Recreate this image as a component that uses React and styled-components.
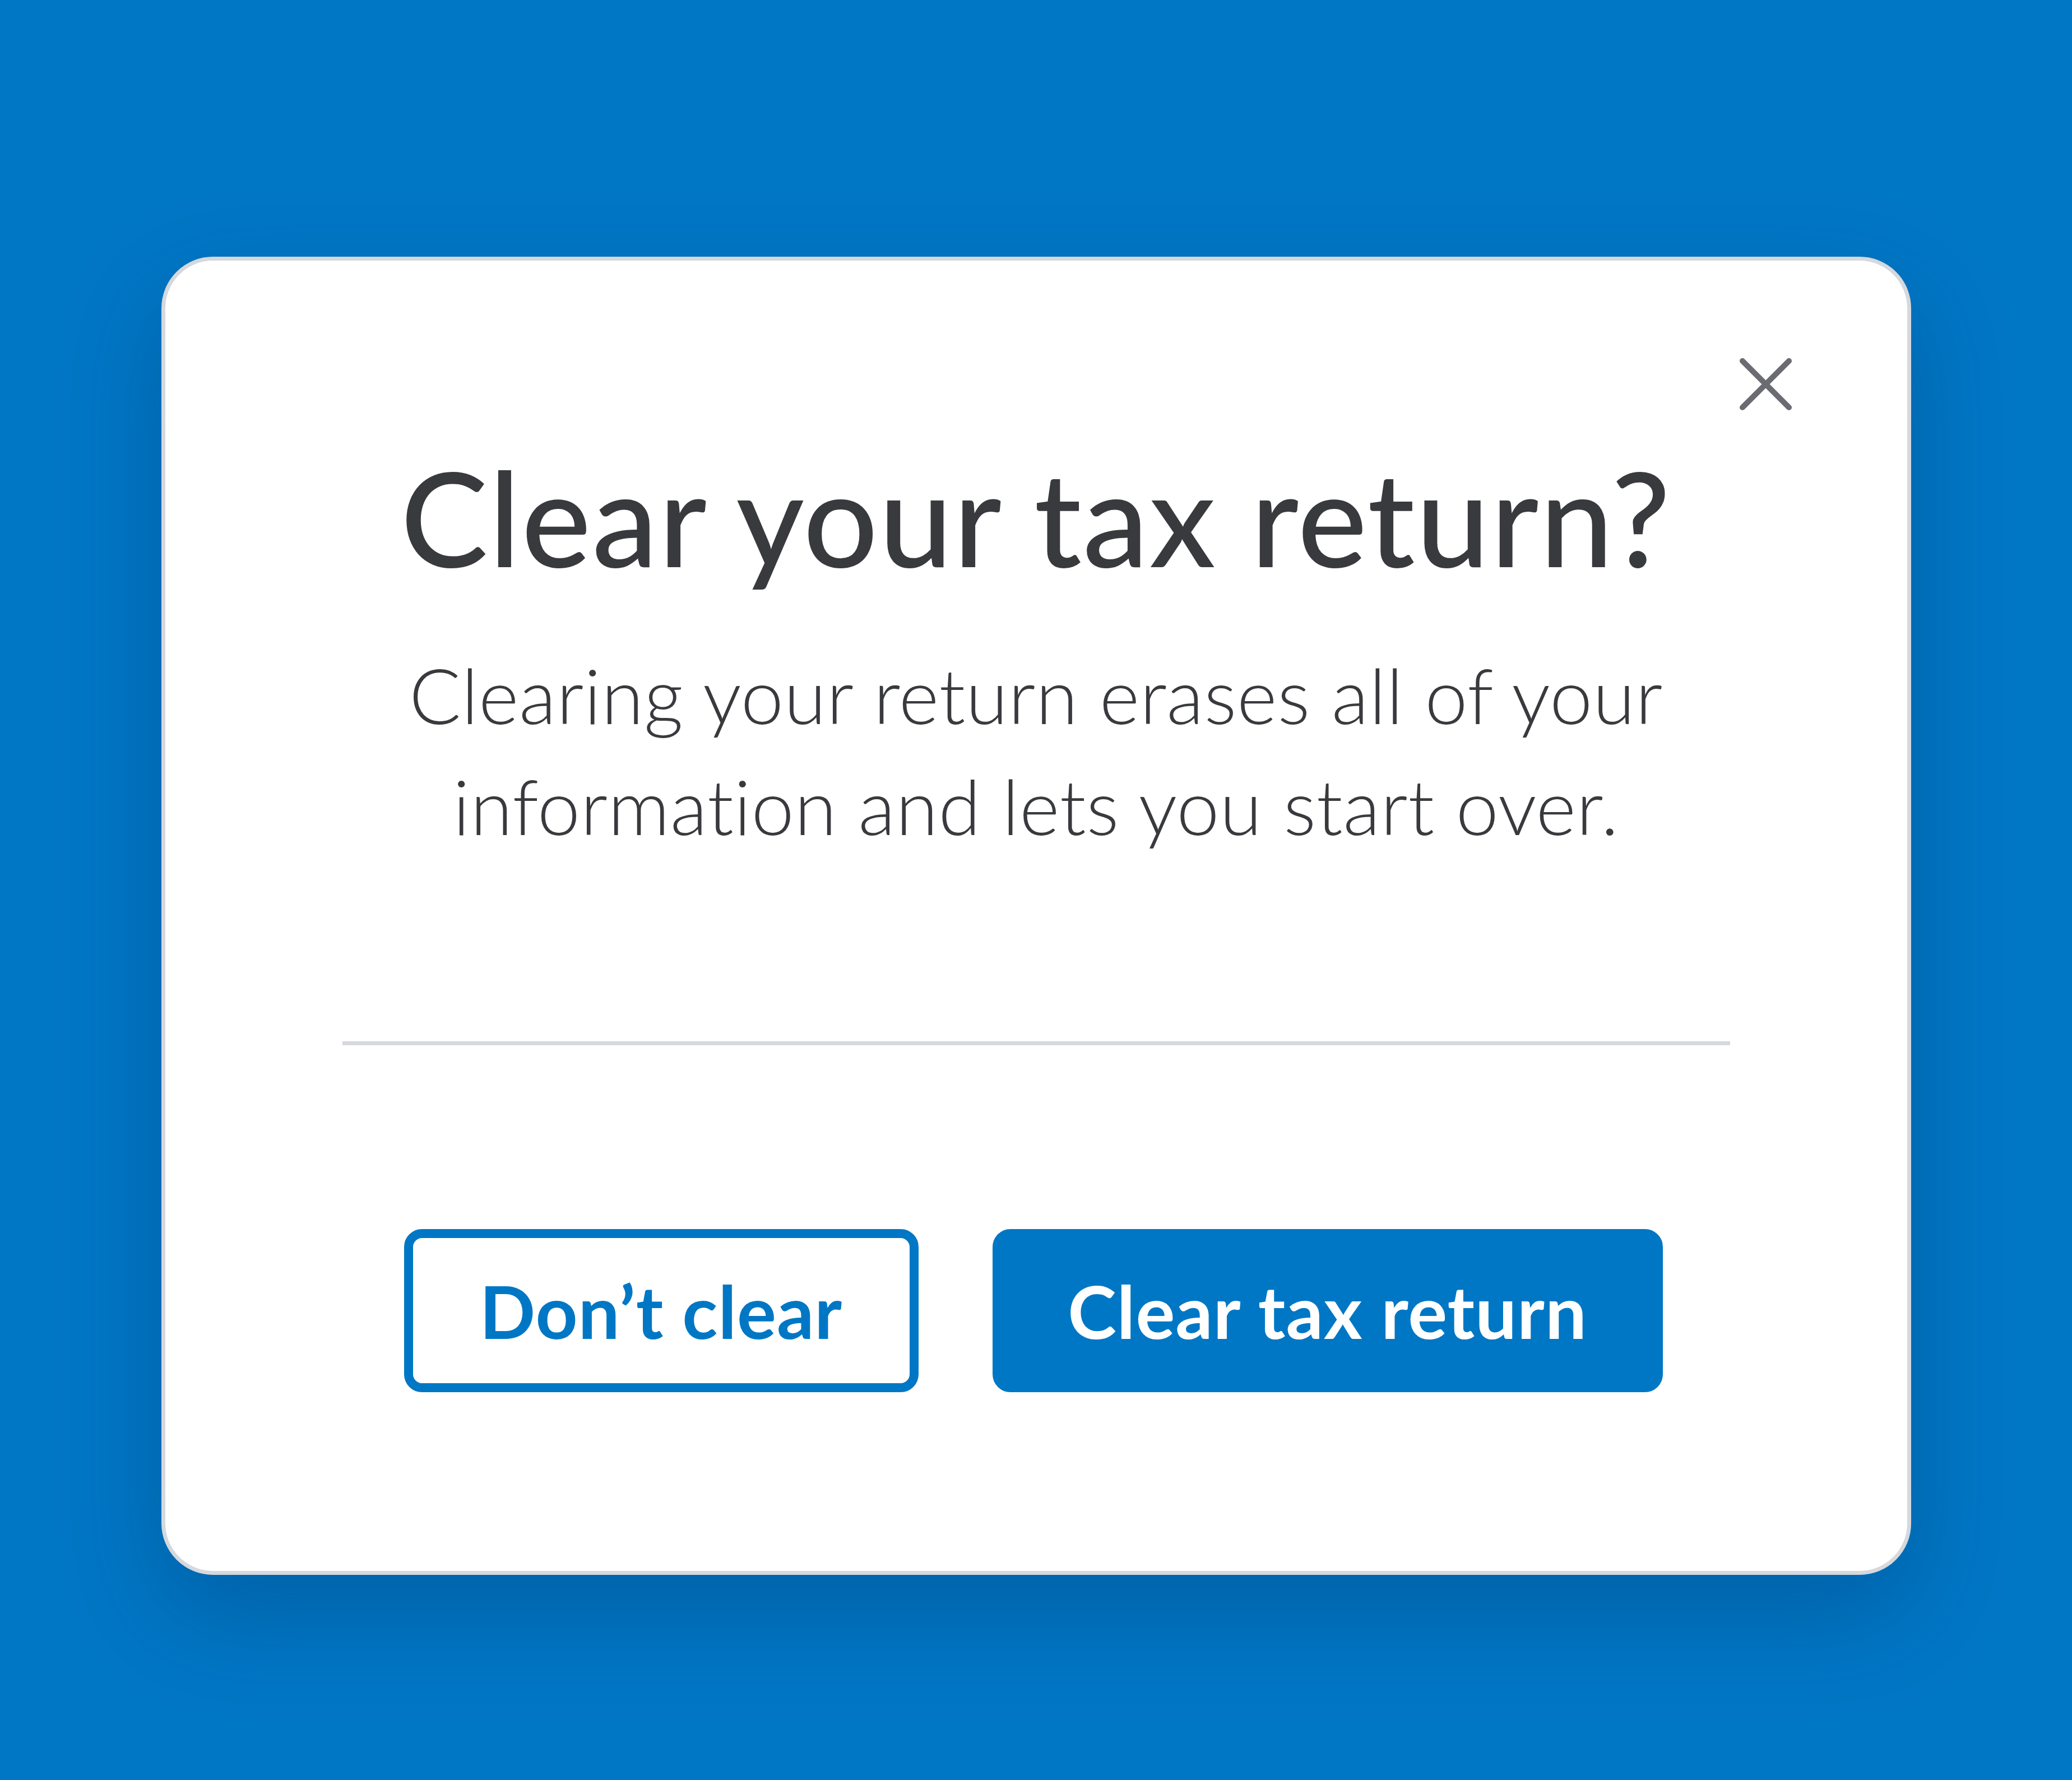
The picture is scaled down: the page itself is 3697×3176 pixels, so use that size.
import React from "react";
import styled, { createGlobalStyle } from "styled-components";

const Global = createGlobalStyle`
  html, body { margin: 0; padding: 0; }
  body {
    background: #0077c5;
    font-family: "Lato", "Noto Sans", sans-serif;
  }
`;

const Page = styled.div`
  min-height: 3176px;
  box-sizing: border-box;
  padding-top: 458px;
  display: flex;
  justify-content: center;
  align-items: flex-start;
  background: #0077c5;
`;

const Card = styled.div`
  position: relative;
  width: 3122px;
  box-sizing: border-box;
  background: #ffffff;
  border: 7px solid #d5d8dd;
  border-radius: 92px;
  box-shadow: 0 70px 180px rgba(0, 40, 90, 0.28);
  display: flex;
  flex-direction: column;
  align-items: center;
  padding: 316px 316px 319px;
`;

const CloseButton = styled.button`
  position: absolute;
  top: 173px;
  right: 205px;
  width: 95px;
  height: 95px;
  padding: 0;
  border: none;
  background: transparent;
  cursor: pointer;
  display: flex;
`;

const Title = styled.h1`
  margin: 0;
  font-family: "Lato", sans-serif;
  font-weight: 500;
  font-size: 234px;
  line-height: 281px;
  letter-spacing: 2px;
  color: #393a3d;
  text-align: center;
  white-space: nowrap;
`;

const Body = styled.p`
  margin: 78px 0 0;
  font-family: "Lato", sans-serif;
  font-weight: 300;
  font-size: 137px;
  line-height: 198px;
  letter-spacing: 0.6px;
  color: #393a3d;
  text-align: center;
`;

const Line = styled.span`
  display: block;
  white-space: nowrap;
`;

const Divider = styled.hr`
  align-self: stretch;
  margin: 322px 0 0;
  border: none;
  height: 7px;
  background: #d5d8dd;
`;

const Actions = styled.div`
  margin-top: 328px;
  padding-right: 10px;
  display: flex;
  gap: 132px;
  justify-content: center;
`;

const Button = styled.button`
  width: ${(p) => p.$width}px;
  height: 291px;
  box-sizing: border-box;
  border-radius: 32px;
  border: 16px solid #0077c5;
  background: ${(p) => (p.$primary ? "#0077c5" : "#ffffff")};
  color: ${(p) => (p.$primary ? "#ffffff" : "#0077c5")};
  font-family: "Lato", sans-serif;
  font-weight: 700;
  font-size: 131px;
  letter-spacing: 1px;
  display: flex;
  align-items: center;
  justify-content: center;
  padding: 0;
  white-space: nowrap;
  cursor: pointer;
`;

const CloseIcon = () => (
  <svg width="95" height="95" viewBox="0 0 95 95" fill="none">
    <path
      d="M6 6 L89 89 M89 6 L6 89"
      stroke="#6b6c72"
      strokeWidth="10"
      strokeLinecap="round"
    />
  </svg>
);

export default function App() {
  return (
    <>
      <Global />
      <Page>
        <Card role="dialog" aria-labelledby="dlg-title">
          <CloseButton aria-label="Close">
            <CloseIcon />
          </CloseButton>
          <Title id="dlg-title">Clear your tax return?</Title>
          <Body>
            <Line>Clearing your return erases all of your</Line>
            <Line>information and lets you start over.</Line>
          </Body>
          <Divider />
          <Actions>
            <Button $width={918}>Don’t clear</Button>
            <Button $width={1196} $primary>
              Clear tax return
            </Button>
          </Actions>
        </Card>
      </Page>
    </>
  );
}
